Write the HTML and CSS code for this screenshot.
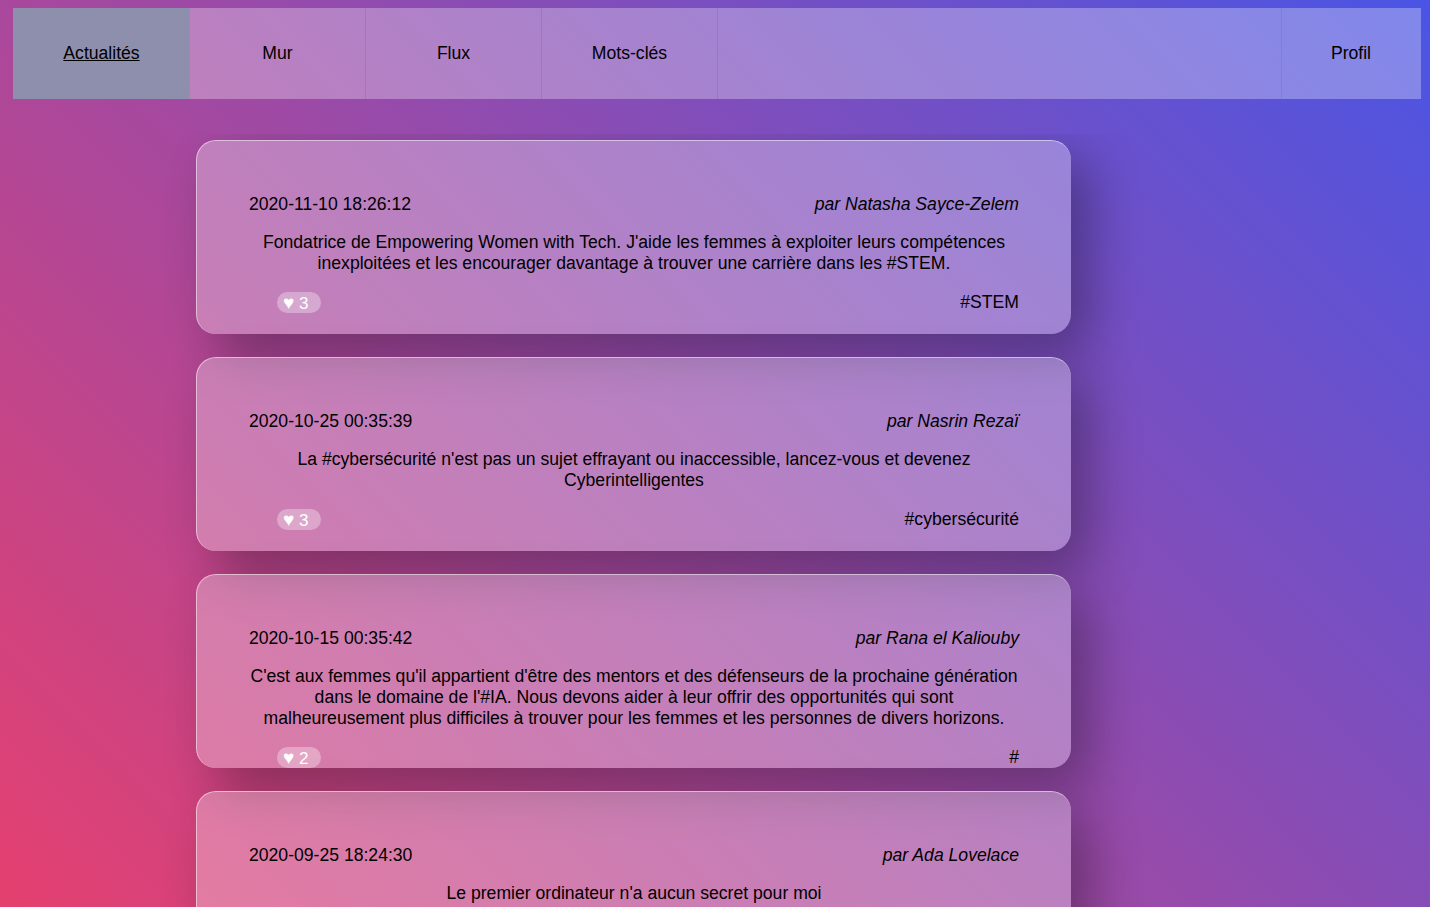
FILE: index.html
```html
<!DOCTYPE html>
<html lang="fr">
<head>
<meta charset="utf-8">
<title>Actualités</title>
<link rel="stylesheet" href="styles.css">
</head>
<body>
<nav class="topnav">
  <a class="nav-item active" href="#">Actualités</a>
  <a class="nav-item" href="#">Mur</a>
  <a class="nav-item" href="#">Flux</a>
  <a class="nav-item" href="#">Mots-clés</a>
  <span class="nav-spacer"></span>
  <a class="nav-item profile" href="#">Profil</a>
</nav>
<main class="feed">
  <article class="post">
    <header class="post-head"><span class="post-date">2020-11-10 18:26:12</span><em class="post-author">par Natasha Sayce-Zelem</em></header>
    <p class="post-text">Fondatrice de Empowering Women with Tech. J'aide les femmes à exploiter leurs compétences inexploitées et les encourager davantage à trouver une carrière dans les #STEM.</p>
    <footer class="post-foot"><button class="like"><span class="heart">♥</span> 3</button><span class="tag">#STEM</span></footer>
  </article>
  <article class="post">
    <header class="post-head"><span class="post-date">2020-10-25 00:35:39</span><em class="post-author">par Nasrin Rezaï</em></header>
    <p class="post-text">La #cybersécurité n'est pas un sujet effrayant ou inaccessible, lancez-vous et devenez Cyberintelligentes</p>
    <footer class="post-foot"><button class="like"><span class="heart">♥</span> 3</button><span class="tag">#cybersécurité</span></footer>
  </article>
  <article class="post">
    <header class="post-head"><span class="post-date">2020-10-15 00:35:42</span><em class="post-author">par Rana el Kaliouby</em></header>
    <p class="post-text">C'est aux femmes qu'il appartient d'être des mentors et des défenseurs de la prochaine génération dans le domaine de l'#IA. Nous devons aider à leur offrir des opportunités qui sont malheureusement plus difficiles à trouver pour les femmes et les personnes de divers horizons.</p>
    <footer class="post-foot"><button class="like"><span class="heart">♥</span> 2</button><span class="tag">#</span></footer>
  </article>
  <article class="post">
    <header class="post-head"><span class="post-date">2020-09-25 18:24:30</span><em class="post-author">par Ada Lovelace</em></header>
    <p class="post-text">Le premier ordinateur n'a aucun secret pour moi</p>
  </article>
</main>
</body>
</html>
```
FILE: styles.css
```css
html, body {
  height: 100%;
}

body {
  margin: 0;
  overflow: hidden;
  font-family: "Liberation Sans", Arial, Helvetica, sans-serif;
  font-size: 17.6px;
  color: #000;
  background: linear-gradient(45deg, #e5406f 0%, #4a55e4 100%);
}

.topnav {
  display: flex;
  height: 91px;
  margin: 8px 9px 0 13px;
  background: rgba(255, 255, 255, 0.3);
}

.nav-item {
  box-sizing: border-box;
  width: 176px;
  display: flex;
  align-items: center;
  justify-content: center;
  color: #000;
  text-decoration: none;
  border-right: 1px solid rgba(125, 125, 125, 0.45);
}

.nav-item.active {
  width: 177px;
  background: #8e8fad;
  text-decoration: underline;
  border-right: none;
}

.nav-spacer {
  flex: 1;
}

.nav-item.profile {
  width: auto;
  padding: 0 50px 0 49px;
  border-right: none;
  border-left: 1px solid rgba(125, 125, 125, 0.45);
}

.feed {
  box-sizing: border-box;
  height: calc(100% - 134px);
  margin-top: 35px;
  padding-top: 6px;
  overflow: hidden;
}

.post {
  box-sizing: border-box;
  width: 875px;
  height: 194px;
  margin: 0 0 23px 196px;
  padding: 53px 52px 0 52px;
  border-radius: 20px;
  background: rgba(255, 255, 255, 0.3);
  border-top: 1px solid rgba(255, 255, 255, 0.5);
  border-left: 1px solid rgba(255, 255, 255, 0.5);
  box-shadow: 20px 20px 50px rgba(0, 0, 0, 0.32);
}

.post-head {
  display: flex;
  justify-content: space-between;
  line-height: 21px;
  margin-bottom: 17px;
}

.post-author {
  font-style: italic;
}

.post-text {
  margin: 0 0 18px;
  text-align: center;
  line-height: 21px;
}

.post-foot {
  display: flex;
  align-items: center;
  justify-content: space-between;
  line-height: 21px;
}

.like {
  box-sizing: border-box;
  width: 44px;
  height: 21px;
  margin-left: 28px;
  padding: 0 0 0 6px;
  border: none;
  border-radius: 11px;
  background: rgba(255, 255, 255, 0.32);
  color: #fff;
  text-align: left;
  font-family: "Liberation Sans", Arial, Helvetica, sans-serif;
  font-size: 17px;
  line-height: 21px;
  white-space: nowrap;
}

.heart {
  font-size: 19px;
}
```
